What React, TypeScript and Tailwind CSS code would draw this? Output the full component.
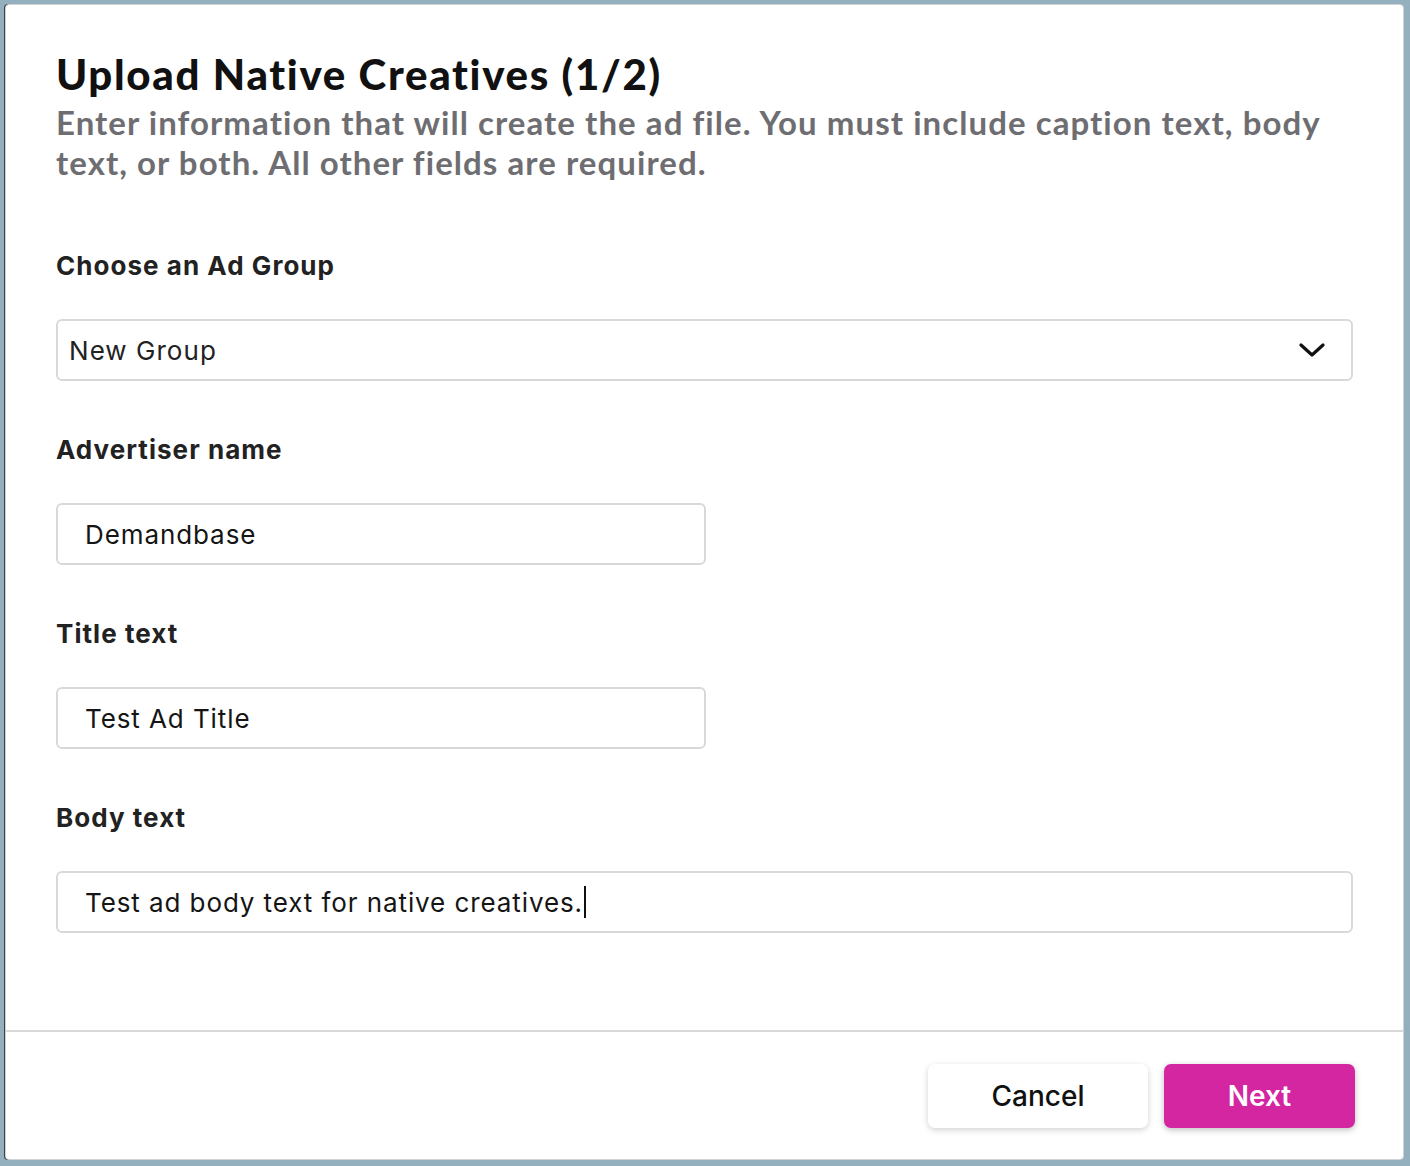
export default function App() {
  const fields = [
    { label: "Advertiser name", value: "Demandbase", wide: false, caret: false },
    { label: "Title text", value: "Test Ad Title", wide: false, caret: false },
    { label: "Body text", value: "Test ad body text for native creatives.", wide: true, caret: true },
  ]

  return (
    <div className="min-h-screen bg-[#94b0bf] pt-[4px] pl-[5px] pr-[6px] pb-[6px]">
      <div className="flex h-[1156px] flex-col rounded-[4px] border border-[#cfd3d6] bg-white shadow-[-1px_0_0_#3a3f44]">
        <div className="flex-1 px-[50px] pt-[45px]">
          <h1 className="font-['Lato',sans-serif] text-[42px] font-black leading-[48px] tracking-[0.04em] text-[#111]">
            Upload Native Creatives (1/2)
          </h1>
          <p className="mt-[4px] font-['Lato',sans-serif] text-[33px] font-bold leading-[40px] tracking-[0.032em] text-[#6e6e72]">
            Enter information that will create the ad file. You must include caption text, body text, or both. All other fields are required.
          </p>

          <div className="mt-[68px] font-['Inter',sans-serif]">
            <label className="block text-[26px] font-bold leading-[32px] tracking-[0.04em] text-[#222]">Choose an Ad Group</label>
            <div className="mt-[37px] flex h-[62px] items-center justify-between rounded-[6px] border-2 border-[#d9d9d9] pl-[11px] pr-[26px]">
              <span className="text-[26px] tracking-[0.04em] text-[#222]">New Group</span>
              <svg width="26" height="16" viewBox="0 0 26 16" fill="none">
                <polyline points="2,3 13,13 24,3" stroke="#111" strokeWidth="3.2" strokeLinecap="round" strokeLinejoin="round" />
              </svg>
            </div>

            {fields.map((f) => (
              <div key={f.label}>
                <label className="mt-[53px] block text-[26px] font-bold leading-[32px] tracking-[0.04em] text-[#222]">
                  {f.label}
                </label>
                <div
                  className={`mt-[37px] flex h-[62px] items-center rounded-[6px] border-2 border-[#d9d9d9] pl-[27px] ${
                    f.wide ? "w-full" : "w-[650px]"
                  }`}
                >
                  <span className="text-[26px] tracking-[0.035em] text-[#151515]">{f.value}</span>
                  {f.caret && <span className="ml-[1px] inline-block h-[32px] w-[2px] bg-[#111]"></span>}
                </div>
              </div>
            ))}
          </div>
        </div>

        <div className="flex justify-end gap-[16px] border-t-2 border-[#d9d9d9] pt-[32px] pb-[31px] pr-[48px] font-['Inter',sans-serif]">
          <button className="h-[64px] w-[220px] rounded-[7px] bg-white text-[28px] font-medium text-[#111] shadow-[0_2px_6px_rgba(0,0,0,0.18)]">
            Cancel
          </button>
          <button className="h-[64px] w-[191px] rounded-[7px] bg-[#d526a1] text-[28px] font-semibold text-white shadow-[0_2px_6px_rgba(0,0,0,0.25)]">
            Next
          </button>
        </div>
      </div>
    </div>
  )
}
